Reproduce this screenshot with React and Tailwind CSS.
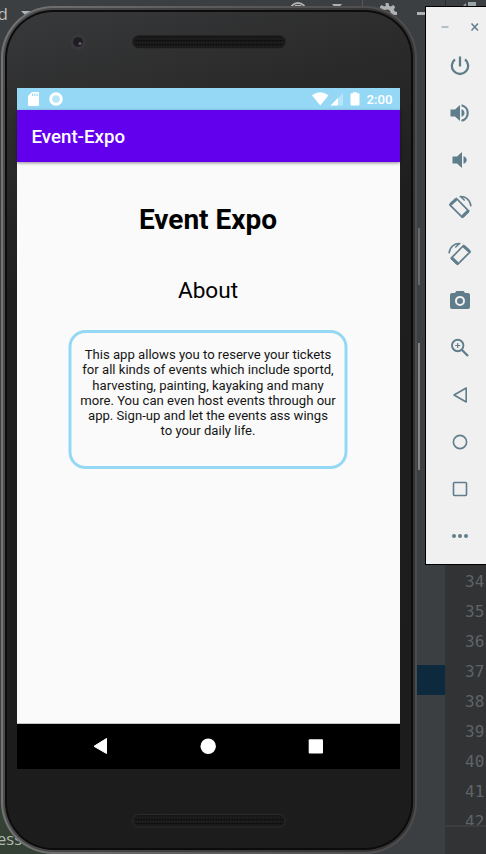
const LINES = [34, 35, 36, 37, 38, 39, 40, 41, 42];

function Speaker({ id, light }) {
  return (
    <svg className="block h-[14px] w-[154px]" viewBox="0 0 154 14">
      <defs>
        <pattern id={id} width="5.35" height="4" patternUnits="userSpaceOnUse">
          <rect width="5.35" height="4" fill="#1c1c1c" />
          <circle cx="1.3" cy="1.6" r="0.9" fill="#080808" />
          <circle cx="4" cy="1.6" r="0.9" fill="#080808" />
        </pattern>
      </defs>
      <rect x="0.5" y="0.5" width="153" height="12.6" rx="6.3" fill="#1b1b1b" stroke={light} strokeWidth="0.7" />
      <rect x="2.5" y="1.6" width="149" height="10.4" rx="5" fill={`url(#${id})`} />
    </svg>
  );
}

function Backdrop() {
  return (
    <div className="flex h-full">
      <div className="flex w-[417px] flex-col bg-[#3c3f41]">
        <div className="flex h-[120px]">
          <span className="-ml-[2.5px] mt-[3px] w-[23.5px] font-['Open_Sans',sans-serif] text-[17px] leading-[22px] text-[#bbbbbb]">d</span>
          <svg className="block h-[40px] w-[396px] shrink-0" viewBox="21 0 396 40">
            <path d="M21 11h10l-5 5z" fill="#afb1b3" />
            <circle cx="298" cy="11" r="8" fill="none" stroke="#afb1b3" strokeWidth="2" />
            <path d="M295 5h6v2h-6z" fill="#afb1b3" />
            <path d="M332 4h10l-5 6z" fill="#afb1b3" />
            <path d="M362.5 0v20" stroke="#555759" />
            <g transform="translate(377.5 3)">
              <path d="M8 0h3l.6 2.7 1.7.8L15.700 2l2 2-1.400 2.500.8 1.800 2.400.7v3h-19V9l2.300-.7.9-1.800L2.200 4l2-2 2.500 1.500 1.600-.8zM9.500 6.500a3.500 3.500 0 1 0 0 7 3.500 3.500 0 0 0 0-7z" fill="#afb1b3" fillRule="evenodd" />
            </g>
          </svg>
        </div>
        <div className="grow" />
        <div className="flex h-[50px] w-[120px] items-start bg-[#344033]">
          <span className="-ml-[3px] w-[40px] pt-[23px] font-['Open_Sans',sans-serif] text-[16.500px] leading-[24px] text-[#afb9af]">ess</span>
        </div>
      </div>
      <div className="w-[28px] bg-[#3c3f41]">
        <div className="h-3" />
        <div className="h-[3px] w-[8px] bg-[#afb1b3]" />
        <div className="h-[650px]" />
        <div className="h-[30px] bg-[#0d293e]" />
      </div>
      <div className="flex w-[41px] flex-col bg-[#313335]">
        <div className="flex h-[26px] justify-end border-l border-[#2b2b2b] bg-[#3c3f41] pr-[7px]">
          <svg className="h-[8px] w-[18px]" viewBox="0 0 18 8">
            <path d="M5 3v5H0zM7 2h8v6H7z" fill="#9aa5aa" />
          </svg>
        </div>
        <div className="h-[541px]" />
        <div className="flex h-[258px] flex-col overflow-hidden">
          {LINES.map((n) => (
            <span key={n} className="h-[30px] shrink-0 pl-[20px] font-['DejaVu_Sans_Mono',monospace] text-[16px] leading-[30px] text-[#606366]">{n}</span>
          ))}
        </div>
        <div className="h-[2px] bg-[#3b3d3f]" />
        <div className="grow" />
      </div>
    </div>
  );
}

function StatusBar() {
  return (
    <div className="flex h-[22px] items-center bg-[#95d8f6] pl-[11px] pr-[7px] text-white">
      <svg className="h-[14px] w-[11px]" viewBox="0 0 11 14">
        <path d="M4 0h6q1 0 1 1v12q0 1-1 1H1q-1 0-1-1V4z" fill="#fff" />
        <path d="M4.500 1.500v2.500M6.800 1.500v2.500M9 1.500v2.500" stroke="#95d8f6" strokeWidth="1.100" />
      </svg>
      <svg className="ml-[10px] h-[14px] w-[14px]" viewBox="0 0 14 14">
        <circle cx="7" cy="7" r="5.300" fill="#b9e5f9" stroke="#fff" strokeWidth="3" />
      </svg>
      <svg className="ml-auto h-[14px] w-[49px]" viewBox="0 0 49 14">
        <path d="M0 3.200Q8 -2.500 16.500 3.200L8.250 13.500z" fill="#fff" />
        <path d="M31 1v12.500H18.500z" fill="#b6e4f9" />
        <path d="M26 6v7.500h-7.500z" fill="#fff" />
        <path d="M41 1.300V.3h4v1h1.500q1 0 1 1V12.500q0 1-1 1h-7q-1 0-1-1V2.300q0-1 1-1z" fill="#fff" />
      </svg>
      <span className="ml-[5.500px] w-[26.500px] pt-px text-[13.200px] font-medium leading-[21px]">2:00</span>
    </div>
  );
}

function Phone() {
  return (
    <div className="absolute left-[0.5px] top-[6px] h-[848px] w-[416px] rounded-[52px] bg-linear-to-r from-[#747474] via-[#5c5c5c] to-[#4d4b4b] p-[2px]">
      <div className="h-full rounded-[50px] bg-linear-to-r from-[#4c4b4b] to-[#343232] p-[2px]">
        <div className="h-full rounded-[48px] bg-[#0c0c0c] p-[2px]">
          <div className="flex h-full flex-col rounded-[46px] bg-[linear-gradient(165deg,#38393b_0%,#2a2a2a_15%,#1e1e1e_30%,#1c1c1c_100%)] pl-[10.500px] pr-[10.500px]">
            <div className="flex h-[76px] items-start">
              <svg className="ml-[51.500px] mt-[21px] h-[18px] w-[18px]" viewBox="0 0 18 18">
                <circle cx="9" cy="9" r="8" fill="#38383a" />
                <circle cx="9" cy="9" r="4.800" fill="#1e1d24" />
                <circle cx="11" cy="10.500" r="1.500" fill="#71546a" />
              </svg>
              <div className="ml-[45.500px] mt-[23px]"><Speaker id="mesh-top" light="#222222" /></div>
            </div>
            <div className="flex h-[681px] w-[383px] flex-col bg-[#fafafa] text-black">
              <StatusBar />
              <div className="z-10 h-[52px] bg-[#6200ee] pl-[14.500px] pt-px text-[18.700px] font-medium leading-[53px] text-white shadow-[0_1px_3px_rgba(0,0,0,0.45)]">Event-Expo</div>
              <div className="flex grow flex-col items-center border-b border-[#c4c4c4]">
                <h1 className="mt-[41px] pr-px text-[28px] font-bold leading-[34px]">Event Expo</h1>
                <h2 className="mt-[40px] pr-px text-[22.600px] leading-[28px]">About</h2>
                <div className="mt-[25px] h-[139px] w-[279px] -translate-x-[0.500px] rounded-[17px] border-[3px] border-[#95d8f6] pt-[14px] text-center text-[13.120px] leading-[15.300px] text-[#151515]">
                  {[
                    'This app allows you to reserve your tickets',
                    'for all kinds of events which include sportd,',
                    'harvesting, painting, kayaking and many',
                    'more. You can even host events through our',
                    'app. Sign-up and let the events ass wings',
                    'to your daily life.',
                  ].map((line) => <p key={line} className="whitespace-nowrap">{line}</p>)}
                </div>
              </div>
              <div className="h-[45px] bg-black">
                <svg className="block h-[45px] w-[383px]" viewBox="0 0 383 45">
                  <path d="M77 22.300 89.500 14.500v15z" fill="#fff" stroke="#fff" strokeLinejoin="round" />
                  <circle cx="191.200" cy="22.300" r="7.700" fill="#fff" />
                  <rect x="291.700" y="15.300" width="14.300" height="14.300" rx="1" fill="#fff" />
                </svg>
              </div>
            </div>
            <div className="mt-[45px] pl-[115px]"><Speaker id="mesh-bottom" light="#343434" /></div>
          </div>
        </div>
      </div>
    </div>
  );
}

const TOOLS = [
  ['power', <g fill="none" stroke="#607d8b" strokeWidth="2.300"><path d="M12 2.500v10" /><path d="M7 5.300a8.200 8.200 0 1 0 10 0" /></g>],
  ['volume up', <g><path d="M2.500 8.500h4.500L12 4v16l-5-4.500H2.500zM13.500 8.200q3 1 3 3.800t-3 3.800z" fill="#607d8b" /><path d="M13.500 4.200a8 8 0 0 1 0 15.600" fill="none" stroke="#607d8b" strokeWidth="2.200" /></g>],
  ['volume down', <path d="M4.500 8.500h4.500L14 4v16l-5-4.500H4.500zM15.500 8.200q3.200 1 3.200 3.800t-3.200 3.800z" fill="#607d8b" />],
  ['rotate left', <g fill="none" stroke="#607d8b"><path d="M1.800 9.800 8.500 3.500 20.800 16.200 14.400 22.300z" strokeWidth="1.700" strokeLinejoin="round" /><path d="M2.600 9.400 8.300 4.200M14.600 21.300 20 16.200" strokeWidth="3" /><path d="M11.500 1.600c6.200-.6 10.800 3.400 11.500 9.700M12.500 1.500l4.200 4" strokeWidth="1.400" /></g>],
  ['rotate right', <g fill="none" stroke="#607d8b"><path d="M22.200 9.800 15.500 3.500 3.200 16.200 9.600 22.300z" strokeWidth="1.700" strokeLinejoin="round" /><path d="M21.400 9.400 15.700 4.200M9.400 21.300 4 16.200" strokeWidth="3" /><path d="M12.500 1.600C6.300 1 1.700 5 1 11.300M11.500 1.500l-4.200 4" strokeWidth="1.400" /></g>],
  ['screenshot', <path fillRule="evenodd" d="M8.500 2h7l1.700 2H20q2 0 2 2v12q0 2-2 2H4q-2 0-2-2V6q0-2 2-2h2.800zM12 6.900a5 5 0 1 0 0 10 5 5 0 0 0 0-10zm0 2a3 3 0 1 1 0 6 3 3 0 0 1 0-6z" fill="#607d8b" />],
  ['zoom', <g fill="none" stroke="#607d8b"><circle cx="9.700" cy="9.500" r="5.700" strokeWidth="1.900" /><path d="M14 14l6 6" strokeWidth="2.300" /><path d="M9.700 7v5M7.200 9.500h5" strokeWidth="1.200" /></g>],
  ['back', <path d="M18.200 5v14L6 12z" fill="none" stroke="#607d8b" strokeWidth="1.600" strokeLinejoin="round" />],
  ['home', <circle cx="12" cy="12" r="6.600" fill="none" stroke="#607d8b" strokeWidth="1.600" />],
  ['overview', <rect x="5.500" y="5.500" width="13" height="13" rx="1" fill="none" stroke="#607d8b" strokeWidth="1.600" />],
  ['more', <g fill="#607d8b"><circle cx="6" cy="12" r="2" /><circle cx="12" cy="12" r="2" /><circle cx="18" cy="12" r="2" /></g>],
];

function EmulatorToolbar() {
  return (
    <div className="absolute left-[425px] top-[6px] h-[559px] w-[70px] border border-black bg-[#f0f0f0]">
      <div className="flex h-[36px] items-center">
        <svg className="block h-[36px] w-[60px]" viewBox="0 0 60 36">
          <path d="M15.500 20h7" stroke="#9fb0b8" strokeWidth="1.500" />
          <path d="m45.500 16.500 6.500 7m0-7-6.500 7" stroke="#607d8b" strokeWidth="1.500" />
        </svg>
      </div>
      <div className="flex flex-col">
        {TOOLS.map(([name, art]) => (
          <div key={name} className="flex h-[47px] w-[68px] justify-center">
            <svg aria-label={name} className="mt-[11px] h-[24px] w-[24px]" viewBox="0 0 24 24">{art}</svg>
          </div>
        ))}
      </div>
    </div>
  );
}

export default function App() {
  return (
    <div className="relative h-[854px] w-[486px] overflow-hidden bg-[#3c3f41] font-[Roboto,'Open_Sans',sans-serif]">
      <Backdrop />
      <Phone />
      <div className="absolute left-[418px] top-[228px] h-[57px] w-[2px] bg-[#686868]" />
      <div className="absolute left-[418px] top-[343px] h-[127px] w-[2px] bg-[#858585]" />
      <EmulatorToolbar />
    </div>
  );
}
